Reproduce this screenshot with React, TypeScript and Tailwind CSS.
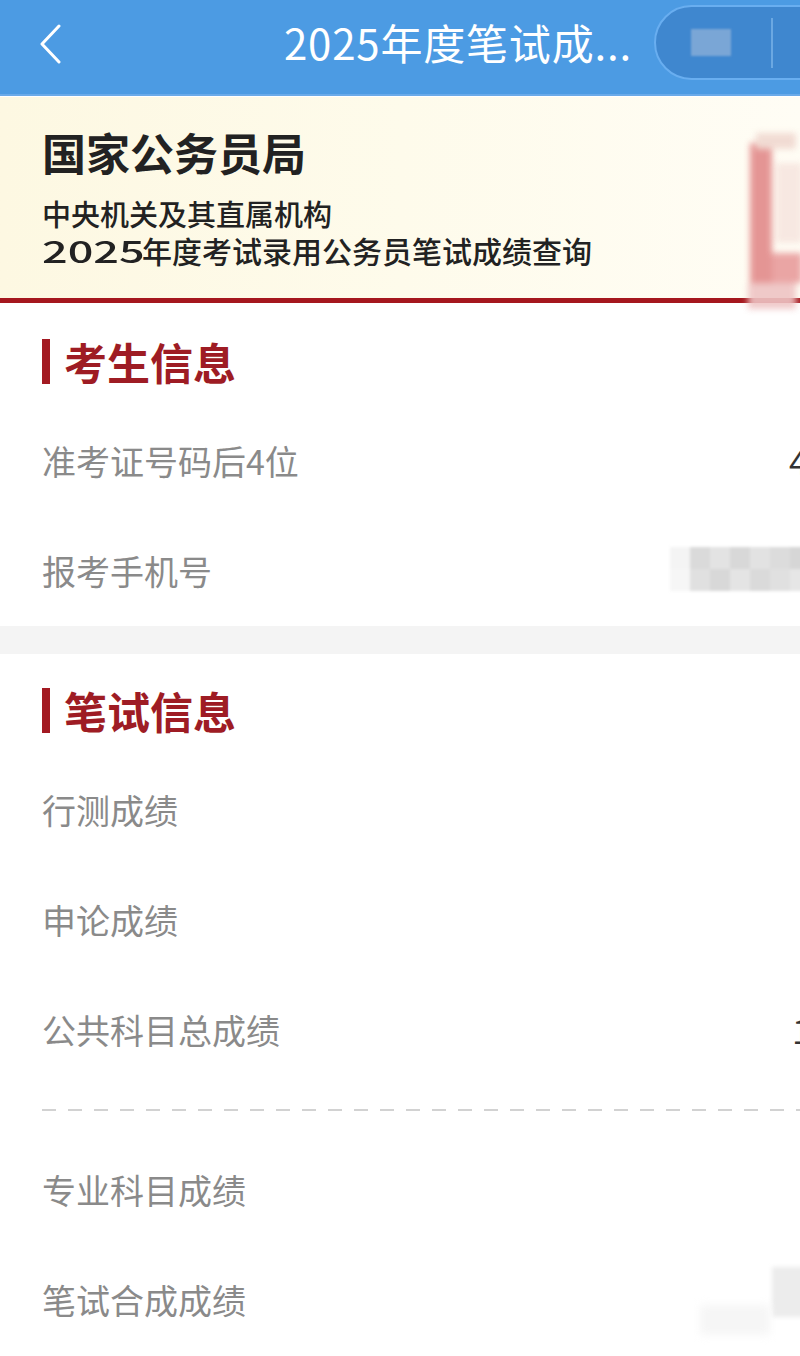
import React from "react";

const font = "font-['Noto_Sans_CJK_SC','Noto_Sans',sans-serif]";

function SectionTitle({ text }: { text: string }) {
  return (
    <div className="flex items-center h-[45px] pl-[42px]">
      <div className="w-[8px] h-[45px] bg-[#a31a22]" />
      <div className="ml-[14px] text-[43px] leading-none font-bold text-[#9e1c24]">{text}</div>
    </div>
  );
}

function Row({ label, children }: { label: string; children?: React.ReactNode }) {
  return (
    <div className="relative flex items-center h-[110px] pl-[42px]">
      <span className="text-[34px] leading-none text-[#8a8a8a]">{label}</span>
      {children}
    </div>
  );
}

export default function App() {
  return (
    <div className={`${font} relative w-[800px] h-[1356px] overflow-hidden bg-white`}>
      {/* Top bar */}
      <div className="flex items-start h-[96px] bg-[#4c9be3] border-b-2 border-[#6aaae9]">
        <div className="mt-[24px] ml-[37px] w-[30px] h-[40px]">
          <svg width="30" height="40" viewBox="0 0 30 40" fill="none">
            <polyline points="22,2 5,20 22,38" stroke="white" strokeWidth="3" strokeLinecap="round" strokeLinejoin="round" />
          </svg>
        </div>
        <div className="ml-[217px] mt-[17px] text-[42px] leading-[50px] tracking-[0.8px] text-white whitespace-nowrap">2025年度笔试成...</div>
        <div className="ml-auto mt-[5px] -mr-[40px] w-[186px] h-[75px] shrink-0 rounded-full bg-[#3f87cf] border-2 border-[#69aef0] flex items-center">
          <div className="ml-[35px] w-[40px] h-[27px] bg-[#7aa6d6] blur-[1px]" />
          <div className="ml-[40px] w-[2px] h-[50px] bg-[#7fb6ea] opacity-70" />
        </div>
      </div>

      {/* Banner */}
      <div className="relative h-[206px] bg-linear-to-r from-[#fdf8e2] via-[#fefbeb] to-[#fffdf5] border-b-[5px] border-[#a5171e] mt-[1px]">
        <div className="pl-[42px] pt-[27px]">
          <div className="text-[44px] leading-[56px] font-bold text-[#222]">国家公务员局</div>
          <div className="mt-[15px] text-[29px] leading-[37px] text-[#222] font-medium">中央机关及其直属机构</div>
          <div className="flex text-[30px] leading-[37px] text-[#222] font-medium whitespace-nowrap">
            <span className="inline-block w-[100px]">
              <span className="inline-block scale-x-[1.5] origin-left">2025</span>
            </span>
            <span>年度考试录用公务员笔试成绩查询</span>
          </div>
        </div>
        <div className="absolute left-[746px] top-[36px] w-[56px] h-[176px] blur-[3px] opacity-90">
          <div className="absolute left-[4px] top-[10px] w-[22px] h-[150px] bg-[#e28a8a]" />
          <div className="absolute left-[10px] top-[0px] w-[40px] h-[16px] bg-[#f0d8d0]" />
          <div className="absolute left-[26px] top-[120px] w-[30px] h-[30px] bg-[#e89c9c]" />
          <div className="absolute left-[2px] top-[150px] w-[48px] h-[26px] bg-[#eec4c4]" />
          <div className="absolute left-[30px] top-[30px] w-[26px] h-[80px] bg-[#f7e6e0]" />
        </div>
      </div>

      {/* Section 1 */}
      <div className="pt-[36px]">
        <SectionTitle text="考生信息" />
        <div className="h-[22px]" />
        <Row label="准考证号码后4位">
          <span className="absolute left-[789px] text-[34px] leading-none text-[#333] whitespace-nowrap">4</span>
        </Row>
        <Row label="报考手机号">
          <div className="absolute left-[670px] top-[31px] w-[140px] h-[44px] blur-[1.5px] grid grid-cols-7 grid-rows-2">
            <div className="bg-[#f4f4f4]" />
            <div className="bg-[#dadada]" />
            <div className="bg-[#e3e3e3]" />
            <div className="bg-[#d8d8d8]" />
            <div className="bg-[#e2e2e2]" />
            <div className="bg-[#dcdcdc]" />
            <div className="bg-[#d6d6d6]" />
            <div className="bg-[#f6f6f6]" />
            <div className="bg-[#e0e0e0]" />
            <div className="bg-[#d8d8d8]" />
            <div className="bg-[#e4e4e4]" />
            <div className="bg-[#dadada]" />
            <div className="bg-[#e0e0e0]" />
            <div className="bg-[#e6e6e6]" />
          </div>
        </Row>
      </div>

      <div className="h-[28px] bg-[#f4f4f4]" />

      {/* Section 2 */}
      <div className="pt-[34px]">
        <SectionTitle text="笔试信息" />
        <div className="h-[22px]" />
        <Row label="行测成绩" />
        <Row label="申论成绩" />
        <Row label="公共科目总成绩">
          <span className="absolute left-[792px] text-[34px] leading-none text-[#333] whitespace-nowrap">1</span>
        </Row>
        <div className="h-[50px] flex items-center pl-[42px]">
          <div className="w-full h-[2px] bg-[repeating-linear-gradient(90deg,#d2d2d2_0px,#d2d2d2_14px,transparent_14px,transparent_26px)]" />
        </div>
        <Row label="专业科目成绩" />
        <Row label="笔试合成成绩">
          <div className="absolute left-[772px] top-[22px] w-[40px] h-[50px] blur-[2px] bg-[#ececec]" />
          <div className="absolute left-[700px] top-[60px] w-[70px] h-[30px] blur-[4px] bg-[#f6f6f6]" />
        </Row>
      </div>
    </div>
  );
}
